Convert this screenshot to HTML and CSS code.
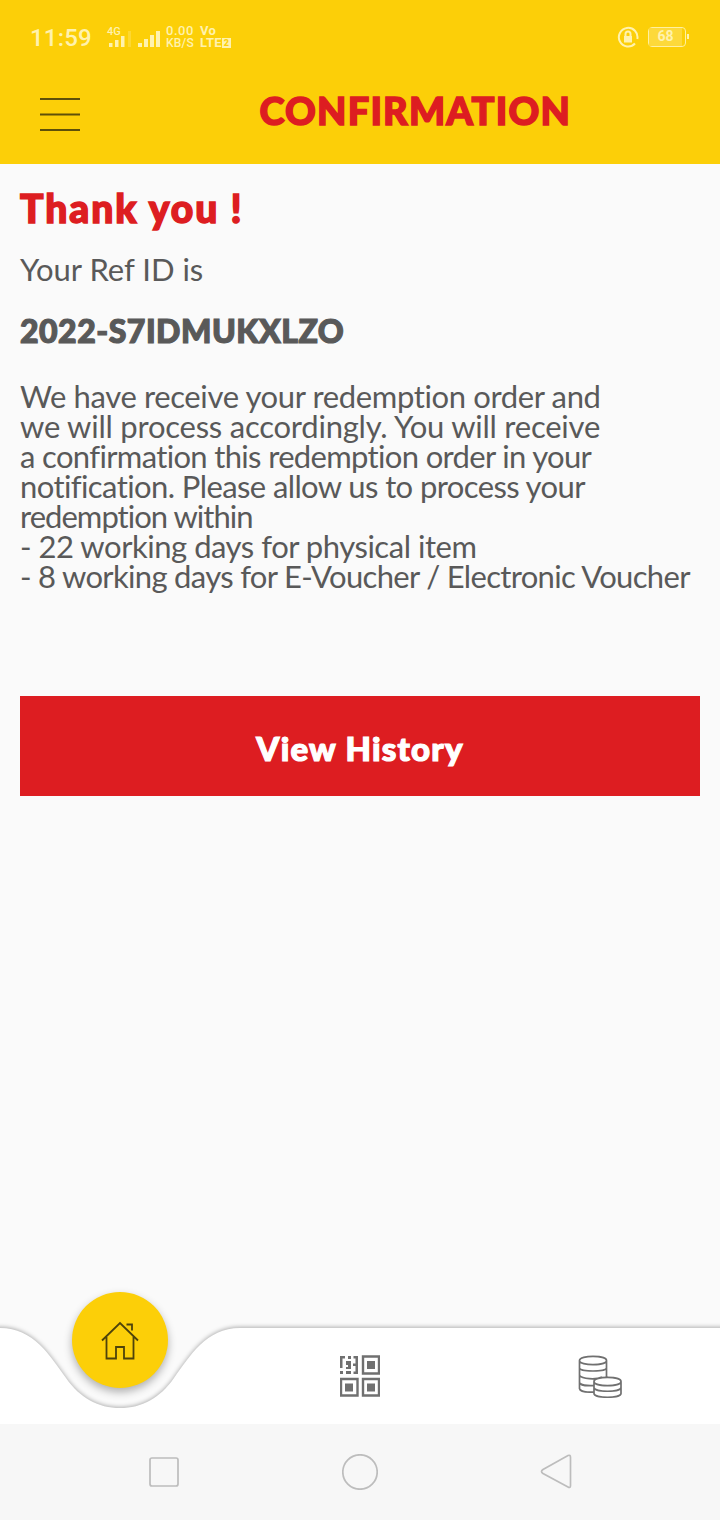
FILE: index.html
```html
<!DOCTYPE html>
<html lang="en">
<head>
<meta charset="utf-8">
<title>Confirmation</title>
<link rel="stylesheet" href="styles.css">
</head>
<body>
<div class="screen">
  <header class="header">
    <div class="status">
      <span class="clock">11:59</span>
      <svg class="signals" width="56" height="28" viewBox="0 0 56 28">
        <text class="net" x="1" y="10">4G</text>
        <path class="bars" d="M3 22v-4h3.500v4zM9 22v-7h3.500v7zM15 22v-11h3.500v11zM32 22v-4h4v4zM38 22v-8h4v8zM44 22v-12h4v12zM50 22v-16h4v16z"/>
        <path class="faint" d="M22 22v-16h3v16z"/>
      </svg>
      <div class="stack speed"><span>0.00</span><span>KB/S</span></div>
      <div class="stack volte"><span>Vo</span><span>LTE<b class="sim">2</b></span></div>
      <svg class="lock" width="22" height="22" viewBox="0 0 22 22">
        <path class="ring" d="M18 17.500A9.300 9.300 0 1 1 20.300 13"/>
        <path class="body" d="M7 10h8v6.500H7z"/>
        <path class="shackle" d="M8.500 10V8a2.500 2.500 0 0 1 5 0v2"/>
      </svg>
      <div class="battery"><span class="level">68</span></div>
    </div>
    <div class="titlebar">
      <svg class="menu" width="40" height="36" viewBox="0 0 40 36"><path d="M0 2h40M0 17.500h40M0 33h40"/></svg>
      <h1 class="title">CONFIRMATION</h1>
    </div>
  </header>
  <main class="content">
    <h2 class="thanks">Thank you !</h2>
    <p class="label">Your Ref ID is</p>
    <p class="ref">2022-S7IDMUKXLZO</p>
    <p class="message">
      <span class="l1">We have receive your redemption order and</span>
      <span class="l2">we will process accordingly. You will receive</span>
      <span class="l3">a confirmation this redemption order in your</span>
      <span class="l4">notification. Please allow us to process your</span>
      <span class="l5">redemption within</span>
      <span class="l6">- 22 working days for physical item</span>
      <span class="l7">- 8 working days for E-Voucher / Electronic Voucher</span>
    </p>
    <button class="history"><span>View History</span></button>
  </main>
  <nav class="tabs">
    <svg class="shape" width="720" height="136" viewBox="0 0 720 136">
      <path d="M-20 40H0C34 40 50 68 66 90C80 110 98 120 120 120S160 110 174 90C190 68 206 40 240 40H740V136H-20Z"/>
    </svg>
    <a class="home"><svg width="40" height="40" viewBox="0 0 40 40"><path d="M2 20.500L20 3L38 20.500M6.500 17V38.500H16V27H24V38.500H33.500V17M26.500 4.500H32V10.500"/></svg></a>
    <a class="tab">
      <svg width="40" height="42" viewBox="0 0 40 42">
        <path class="qr" d="M23 1.500h16v17H23zM1 24h16.500v16.500H1zM23 24h16v16.500H23z"/>
        <path class="dot" d="M27 6h8v8h-8zM5 28.500h8v8H5zM27 28.500h8v8h-8zM0 1h5v2.500H2.500V13H0zM8 1h3v3H8zM13.500 1H18v18h-4.500v-2.500h2V11H13V8.500h2.500v-5h-2zM6 6h5v8H6v-2h2v-2H6zM0 16h3v3H0zM6 16h5v3H6z"/>
      </svg>
    </a>
    <a class="tab coins">
      <svg width="44" height="44" viewBox="0 0 44 44">
        <path d="M1.500 5.500C1.500 0 28.500 0 28.500 5.500S1.500 11 1.500 5.500V33.500C2 36.500 9 37.500 16 37M28.500 5.500V22M1.500 13C1.500 17 28.500 17 28.500 13M1.500 20.500C4 24 18 25 24 22M1.500 27.500C2 30 9 31 16 30.500M16 26.500C16 21 43 21 43 26.500S16 32 16 26.500V38.500C16 43.500 43 43.500 43 38.500V26.500M16 32.500C16 37.500 43 37.500 43 32.500"/>
      </svg>
    </a>
  </nav>
  <div class="system">
    <svg width="36" height="36" viewBox="0 0 36 36"><rect x="4" y="4" width="28" height="28" rx="2"/></svg>
    <svg width="36" height="36" viewBox="0 0 36 36"><circle cx="18" cy="18" r="17.200"/></svg>
    <svg width="36" height="36" viewBox="0 0 36 36"><path d="M32.500 3.500V31.500Q32.500 34.500 30 33L5 19.500Q2 17.500 5 15.500L30 1.500Q32.500 .5 32.500 3.500Z"/></svg>
  </div>
</div>
</body>
</html>
```

FILE: styles.css
```css
* { box-sizing: border-box; }
body { margin: 0; background: #fafafa; font-family: Lato, sans-serif; }
h1, h2, p { margin: 0; }
.screen { width: 720px; height: 1520px; display: flex; flex-direction: column; overflow: hidden; }

.header { height: 164px; background: #fccf08; flex: none; }
.status { height: 76px; display: flex; align-items: center; padding: 0 32px 0 30px; color: #fff2ae; font-family: Roboto, sans-serif; }
.clock { width: 76px; font-size: 24px; line-height: 28px; letter-spacing: .2px; font-weight: 500; }
.signals { fill: #fff2ae; margin-top: 2px; }
.net { font: 500 11px Roboto, sans-serif; }
.faint { opacity: .25; }
.stack { display: flex; flex-direction: column; font-size: 12px; line-height: 12px; font-weight: 500; margin-top: -2px; }
.speed { width: 30px; margin-left: 4px; letter-spacing: .2px; }
.speed span:first-child { font-size: 13px; letter-spacing: .5px; }
.volte { margin-left: 4px; font-weight: 700; font-size: 13px; letter-spacing: .3px; }
.sim { background: #fff2ae; color: #fccf08; font-size: 9px; line-height: 10px; padding: 0 2px; display: inline-block; vertical-align: 1px; }
.lock { margin-left: auto; margin-top: -3px; }
.ring, .shackle { fill: none; stroke: #fff2ae; stroke-width: 2; }
.body { fill: #fff2ae; }
.battery { position: relative; width: 38px; height: 20px; margin: -3px 2px 0 9px; border: 1.500px solid #fff0a0; border-radius: 4px; display: flex; }
.battery::after { content: ""; position: absolute; right: -4px; top: 6px; width: 2px; height: 5px; background: #fff2ae; }
.level { width: 33px; text-align: center; background: #fdd93a; font-size: 14px; line-height: 17px; font-weight: 700; }

.titlebar { height: 88px; display: flex; padding: 0 149px 0 40px; justify-content: space-between; align-items: flex-start; }
.menu { margin-top: 21px; fill: none; stroke: #5e5009; stroke-width: 2; }
.title { margin-top: 11px; color: #dd1d21; font-size: 38px; line-height: 46px; font-weight: 900; white-space: nowrap; letter-spacing: 1.200px; -webkit-text-stroke: 1.500px #dd1d21; }

.content { flex: 1; padding: 21px 20px 0; color: #595959; display: flex; flex-direction: column; align-items: flex-start; white-space: nowrap; }
.thanks { color: #dd1d21; font-size: 39px; line-height: 46px; font-weight: 900; letter-spacing: 1.950px; -webkit-text-stroke: 1.500px #dd1d21; }
.label { margin-top: 19px; font-size: 31px; line-height: 38px; }
.ref { margin-top: 23px; font-size: 32px; line-height: 40px; font-weight: 900; letter-spacing: .5px; -webkit-text-stroke: 1.200px #595959; }
.message { margin-top: 30px; display: flex; flex-direction: column; align-items: flex-start; font-size: 31px; line-height: 30px; }
.l1 { letter-spacing: -.37px; }
.l2 { letter-spacing: -.23px; }
.l3 { letter-spacing: -.66px; }
.l4 { letter-spacing: -.6px; }
.l5 { letter-spacing: -.97px; }
.l6 { letter-spacing: -.47px; }
.l7 { letter-spacing: -.68px; }
.history { width: 680px; height: 100px; margin-top: 105px; padding: 4px 0 0; border: 0; background: #dd1d21; color: #fff; font: 900 33px/40px Lato, sans-serif; letter-spacing: 1.200px; -webkit-text-stroke: 1.200px #fff; }

.tabs { position: relative; flex: none; height: 136px; display: grid; grid-template-columns: 240px 240px 240px; }
.shape { position: absolute; inset: 0; overflow: visible; fill: #fff; filter: drop-shadow(0 -1px 2px rgba(0,0,0,.3)); }
.home { position: relative; width: 96px; height: 96px; margin: 4px 0 0 72px; border-radius: 50%; background: #fccf08; box-shadow: 0 4px 8px rgba(0,0,0,.3); display: flex; align-items: center; justify-content: center; }
.home svg { fill: none; stroke: #4e430b; stroke-width: 1.800; }
.tab { position: relative; padding-top: 67px; display: flex; justify-content: center; align-items: flex-start; }
.qr { fill: none; stroke: #707070; stroke-width: 2.400; }
.dot { fill: #707070; }
.coins svg { fill: none; stroke: #707070; stroke-width: 1.700; }

.system { position: relative; flex: none; height: 96px; padding: 0 146px; background: #f7f7f7; display: flex; align-items: center; justify-content: space-between; }
.system svg { fill: none; stroke: #bdbdbd; stroke-width: 1.700; }
```
